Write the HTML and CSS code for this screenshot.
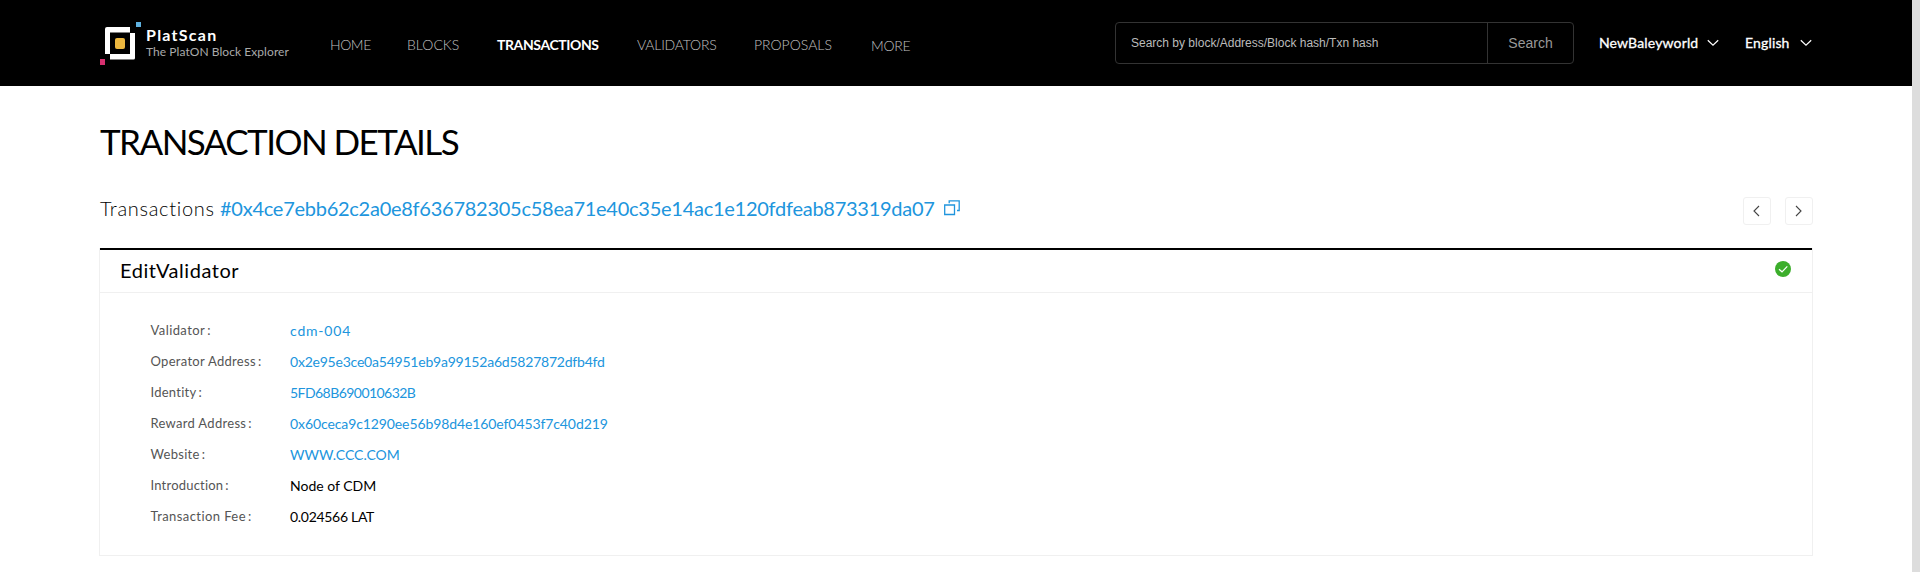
FILE: index.html
```
<!DOCTYPE html>
<html lang="en">
<head>
<meta charset="utf-8">
<title>PlatScan - Transaction Details</title>
<link rel="stylesheet" href="styles.css">
</head>
<body>
<div class="page">
  <header class="header">
    <a class="logo">
      <svg class="logo-mark" width="42" height="44" viewBox="0 0 42 44">
        <path d="M5 32V7q0-2 2-2H30V10.500H10V32Z" fill="#fff"/>
        <path d="M30 11H35V36q0 1.500-1.500 1.500H10V32H30Z" fill="#fff"/>
        <rect x="15" y="16" width="10" height="11" rx="2" fill="#ecb73f"/>
        <rect x="36" width="5" height="5" fill="#5fb2e0"/>
        <rect y="37" width="5" height="6" fill="#d6306f"/>
      </svg>
      <span class="logo-text">
        <strong class="logo-name">PlatScan</strong>
        <span class="logo-tagline">The PlatON Block Explorer</span>
      </span>
    </a>
    <nav class="nav">
      <a class="nav-item nav-home">HOME</a>
      <a class="nav-item nav-blocks">BLOCKS</a>
      <a class="nav-item nav-transactions active">TRANSACTIONS</a>
      <a class="nav-item nav-validators">VALIDATORS</a>
      <a class="nav-item nav-proposals">PROPOSALS</a>
      <a class="nav-item nav-more">MORE</a>
    </nav>
    <div class="search">
      <span class="search-input">Search by block/Address/Block hash/Txn hash</span>
      <span class="search-button">Search</span>
    </div>
    <div class="select select-network"><span>NewBaleyworld</span>
      <svg width="12" height="8" viewBox="0 0 12 8"><path d="M.8 1.200 6 6.200 11.200 1.200" fill="none" stroke="#fff" stroke-width="1.200"/></svg>
    </div>
    <div class="select select-language"><span>English</span>
      <svg width="12" height="8" viewBox="0 0 12 8"><path d="M.8 1.200 6 6.200 11.200 1.200" fill="none" stroke="#fff" stroke-width="1.200"/></svg>
    </div>
  </header>
  <main class="content">
    <h1 class="title">TRANSACTION DETAILS</h1>
    <div class="subtitle">
      <span class="subtitle-label">Transactions</span>
      <span class="hash">#0x4ce7ebb62c2a0e8f636782305c58ea71e40c35e14ac1e120fdfeab873319da07</span>
      <svg class="copy" width="17" height="16" viewBox="0 0 17 16" fill="none" stroke="#2095dd" stroke-width="1.300"><path d="M.7 5H10.500V14.500H.7ZM5.200 3.200V.8H15.200V10.500H13"/></svg>
      <span class="pager">
        <span class="pager-button"><svg width="8" height="12" viewBox="0 0 8 12"><path d="M6 1 1 6 6 11" fill="none" stroke="#444" stroke-width="1.100"/></svg></span>
        <span class="pager-button"><svg width="8" height="12" viewBox="0 0 8 12"><path d="M1 1 6 6 1 11" fill="none" stroke="#444" stroke-width="1.100"/></svg></span>
      </span>
    </div>
    <section class="card">
      <div class="card-head">
        <h2 class="card-title">EditValidator</h2>
        <svg width="16" height="16" viewBox="0 0 16 16"><circle cx="8" cy="8" r="8" fill="#3cae2b"/><path d="M4 8.200 7 10.800 12.300 5.300" fill="none" stroke="#fff" stroke-width="1.200"/></svg>
      </div>
      <dl class="details">
        <div class="row"><dt class="label"><span class="label-validator">Validator</span><i>:</i></dt><dd class="value link value-name">cdm-004</dd></div>
        <div class="row"><dt class="label"><span>Operator Address</span><i>:</i></dt><dd class="value link value-operator">0x2e95e3ce0a54951eb9a99152a6d5827872dfb4fd</dd></div>
        <div class="row"><dt class="label"><span class="label-identity">Identity</span><i>:</i></dt><dd class="value link value-identity">5FD68B690010632B</dd></div>
        <div class="row"><dt class="label"><span>Reward Address</span><i>:</i></dt><dd class="value link value-reward">0x60ceca9c1290ee56b98d4e160ef0453f7c40d219</dd></div>
        <div class="row"><dt class="label"><span>Website</span><i>:</i></dt><dd class="value link">WWW.CCC.COM</dd></div>
        <div class="row"><dt class="label"><span class="label-intro">Introduction</span><i>:</i></dt><dd class="value">Node of CDM</dd></div>
        <div class="row"><dt class="label"><span class="label-fee">Transaction Fee</span><i>:</i></dt><dd class="value value-fee">0.024566 LAT</dd></div>
      </dl>
    </section>
  </main>
</div>
</body>
</html>
```

FILE: styles.css
```
* { box-sizing: border-box; }
body {
  margin: 0;
  height: 572px;
  overflow: hidden;
  background: #ddd;
  font-family: Lato, "Open Sans", sans-serif;
  color: #000;
}
.page { width: 1912px; height: 572px; background: #fff; }
svg { display: block; flex: none; }

.header {
  display: flex;
  height: 86px;
  padding-left: 100px;
  background: #000;
  color: #fff;
  white-space: nowrap;
}
.logo { display: flex; width: 230px; padding-top: 22px; }
.logo-mark { margin-right: 4px; }
.logo-text { display: flex; flex-direction: column; padding-top: 5px; }
.logo-name { font-size: 16px; line-height: 16px; letter-spacing: 1.25px; }
.logo-tagline { font-size: 12px; line-height: 17px; letter-spacing: 0.06px; color: #aaa; }

.nav { display: flex; width: 785px; padding-top: 35px; }
.nav-item { font-size: 14px; line-height: 20px; font-weight: 300; color: #c0c0c0; }
.nav-home { width: 77px; letter-spacing: -0.4px; }
.nav-blocks { width: 90px; }
.nav-transactions { width: 140px; letter-spacing: -0.4px; }
.nav-validators { width: 117px; letter-spacing: -0.2px; }
.nav-proposals { width: 117px; }
.nav-more { padding-top: 1px; letter-spacing: -0.3px; }
.nav-item.active { font-weight: 700; color: #fff; }

.search {
  display: flex;
  width: 459px;
  height: 42px;
  margin-top: 22px;
  border: 1px solid #333;
  border-radius: 4px;
  font-family: "Liberation Sans", Arial, sans-serif;
  line-height: 40px;
}
.search-input { width: 372px; padding-left: 15px; border-right: 1px solid #333; font-size: 12px; color: #bbb; }
.search-button { flex: 1; text-align: center; font-size: 14px; color: #999; }

.select { display: flex; align-items: center; height: 85px; font-size: 14px; letter-spacing: 0.15px; -webkit-text-stroke: 0.3px #fff; }
.select-network { width: 146px; margin-left: 25px; gap: 9px; }
.select-language { gap: 10px; }

.content { padding: 31px 99px 0 99px; }
.title { margin: 0; padding-left: 1px; font-size: 35px; line-height: 49px; font-weight: 400; letter-spacing: -1.55px; }
.subtitle { display: flex; align-items: flex-start; margin-top: 31px; height: 51px; font-size: 20px; line-height: 23px; white-space: nowrap; }
.subtitle-label { width: 121px; padding-left: 1px; font-weight: 300; letter-spacing: 0.7px; color: #000; }
.hash { width: 724px; letter-spacing: -0.26px; color: #2095dd; }
.copy { margin-top: 3px; }
.pager { display: flex; gap: 14px; margin-left: auto; }
.pager-button { display: flex; align-items: center; justify-content: center; width: 28px; height: 28px; border: 1px solid #f0f0f0; border-radius: 3px; }

.card { height: 308px; border: 1px solid #f0f0f0; border-top: 0; }
.card-head { display: flex; justify-content: space-between; height: 45px; padding: 0 21px 0 20px; border-top: 2px solid #000; border-bottom: 1px solid #f0f0f0; }
.card-title { margin: 0; font-size: 20px; line-height: 41px; font-weight: 400; letter-spacing: 0.55px; }
.card-head svg { margin-top: 11px; }
.details { margin: 0; padding: 22px 0 0 50.5px; }
.row { display: flex; height: 31px; line-height: 31px; }
.label { display: flex; gap: 2px; width: 139.5px; font-size: 13px; line-height: 30px; letter-spacing: 0.3px; color: #555; }
.label i { font-style: normal; }
.label-validator, .label-fee { letter-spacing: 0.42px; }
.label-identity { letter-spacing: 0.25px; }
.label-intro { letter-spacing: 0.2px; }
.value { margin: 0; font-size: 14px; }
.link { color: #2095dd; }
.value-name { letter-spacing: 0.8px; }
.value-operator { letter-spacing: -0.22px; }
.value-identity { letter-spacing: -0.55px; }
.value-reward { letter-spacing: -0.1px; }
.value-fee { letter-spacing: -0.3px; }
```
